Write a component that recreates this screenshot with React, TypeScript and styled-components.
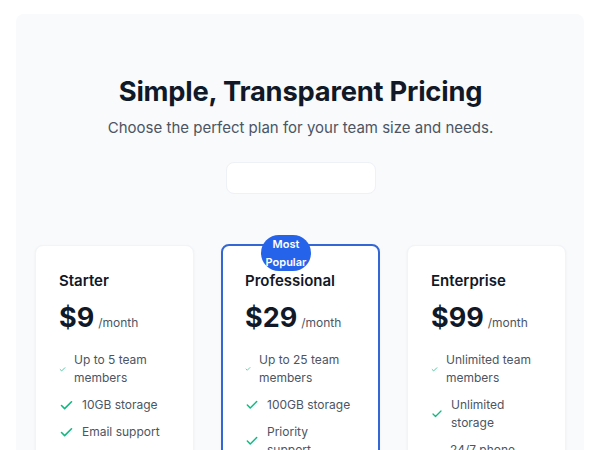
import styled, { createGlobalStyle } from 'styled-components';
import { Check } from 'lucide-react';

type Feature = {
  label: string;
  iconSize: number;
};

type Plan = {
  name: string;
  price: string;
  popular?: boolean;
  features: Feature[];
};

const plans: Plan[] = [
  {
    name: 'Starter',
    price: '$9',
    features: [
      { label: 'Up to 5 team members', iconSize: 7 },
      { label: '10GB storage', iconSize: 15 },
      { label: 'Email support', iconSize: 15 },
    ],
  },
  {
    name: 'Professional',
    price: '$29',
    popular: true,
    features: [
      { label: 'Up to 25 team members', iconSize: 6 },
      { label: '100GB storage', iconSize: 14 },
      { label: 'Priority support', iconSize: 14 },
    ],
  },
  {
    name: 'Enterprise',
    price: '$99',
    features: [
      { label: 'Unlimited team members', iconSize: 7 },
      { label: 'Unlimited storage', iconSize: 12 },
      { label: '24/7 phone support', iconSize: 11 },
    ],
  },
];

const GlobalStyle = createGlobalStyle`
  body {
    margin: 0;
    background: #ffffff;
    font-family: Inter, 'Noto Sans', sans-serif;
    overflow: hidden;
  }
`;

const Panel = styled.section`
  margin: 14px 16px 0;
  padding: 60px 18px 40px 19px;
  min-height: 520px;
  background: #f8fafc;
  border-radius: 8px;
  display: flex;
  flex-direction: column;
  align-items: center;
`;

const Heading = styled.h1`
  margin: 0;
  font-size: 27.3px;
  line-height: 36px;
  font-weight: 700;
  color: #111827;
  letter-spacing: -0.2px;
`;

const Subtitle = styled.p`
  margin: 7px 0 0;
  font-size: 15px;
  line-height: 22px;
  color: #4b5563;
`;

const Toggle = styled.div`
  margin-top: 23px;
  width: 150px;
  height: 32px;
  background: #ffffff;
  border: 1px solid #eef1f5;
  border-radius: 8px;
  box-sizing: border-box;
`;

const Grid = styled.div`
  margin-top: 51px;
  width: 100%;
  display: grid;
  grid-template-columns: repeat(3, 1fr);
  gap: 27px;
  align-items: start;
`;

const Card = styled.div<{ $popular?: boolean }>`
  position: relative;
  background: #ffffff;
  border-radius: 8px;
  padding: ${(p) => (p.$popular ? '24px 26px 23px 22px' : '24px 26px 24px 23px')};
  border: ${(p) => (p.$popular ? '2px solid #3467d6' : '1px solid #f1f4f8')};
  margin-top: ${(p) => (p.$popular ? '-1px' : '0')};
  box-shadow: 0 1px 3px rgba(15, 23, 42, 0.05);
`;

const Badge = styled.div`
  position: absolute;
  top: -11px;
  left: 38px;
  width: 50px;
  height: 36px;
  border-radius: 18px;
  background: #2563eb;
  color: #ffffff;
  font-size: 11px;
  font-weight: 600;
  line-height: 18px;
  text-align: center;
`;

const PlanName = styled.h3`
  margin: 0;
  font-size: 15px;
  line-height: 22px;
  font-weight: 600;
  color: #111827;
`;

const PriceRow = styled.div`
  margin-top: 9px;
  display: flex;
  align-items: baseline;
  gap: 4px;
`;

const Price = styled.span`
  font-size: 27px;
  line-height: 34px;
  font-weight: 700;
  color: #111827;
`;

const Period = styled.span`
  font-size: 12px;
  color: #4b5563;
`;

const FeatureList = styled.ul`
  list-style: none;
  margin: 16px 0 0;
  padding: 0;
  display: flex;
  flex-direction: column;
  gap: 9px;
`;

const FeatureItem = styled.li`
  display: flex;
  align-items: center;
  gap: 8px;
  font-size: 12px;
  line-height: 18px;
  color: #4b5563;

  svg {
    flex-shrink: 0;
    color: #10b981;
  }
`;

const PlanCard = ({ plan }: { plan: Plan }) => (
  <Card $popular={plan.popular}>
    {plan.popular && <Badge>Most Popular</Badge>}
    <PlanName>{plan.name}</PlanName>
    <PriceRow>
      <Price>{plan.price}</Price>
      <Period>/month</Period>
    </PriceRow>
    <FeatureList>
      {plan.features.map((f) => (
        <FeatureItem key={f.label}>
          <Check size={f.iconSize} strokeWidth={2.5} />
          <span>{f.label}</span>
        </FeatureItem>
      ))}
    </FeatureList>
  </Card>
);

export default function App() {
  return (
    <>
      <GlobalStyle />
      <Panel>
        <Heading>Simple, Transparent Pricing</Heading>
        <Subtitle>Choose the perfect plan for your team size and needs.</Subtitle>
        <Toggle />
        <Grid>
          {plans.map((p) => (
            <PlanCard key={p.name} plan={p} />
          ))}
        </Grid>
      </Panel>
    </>
  );
}
